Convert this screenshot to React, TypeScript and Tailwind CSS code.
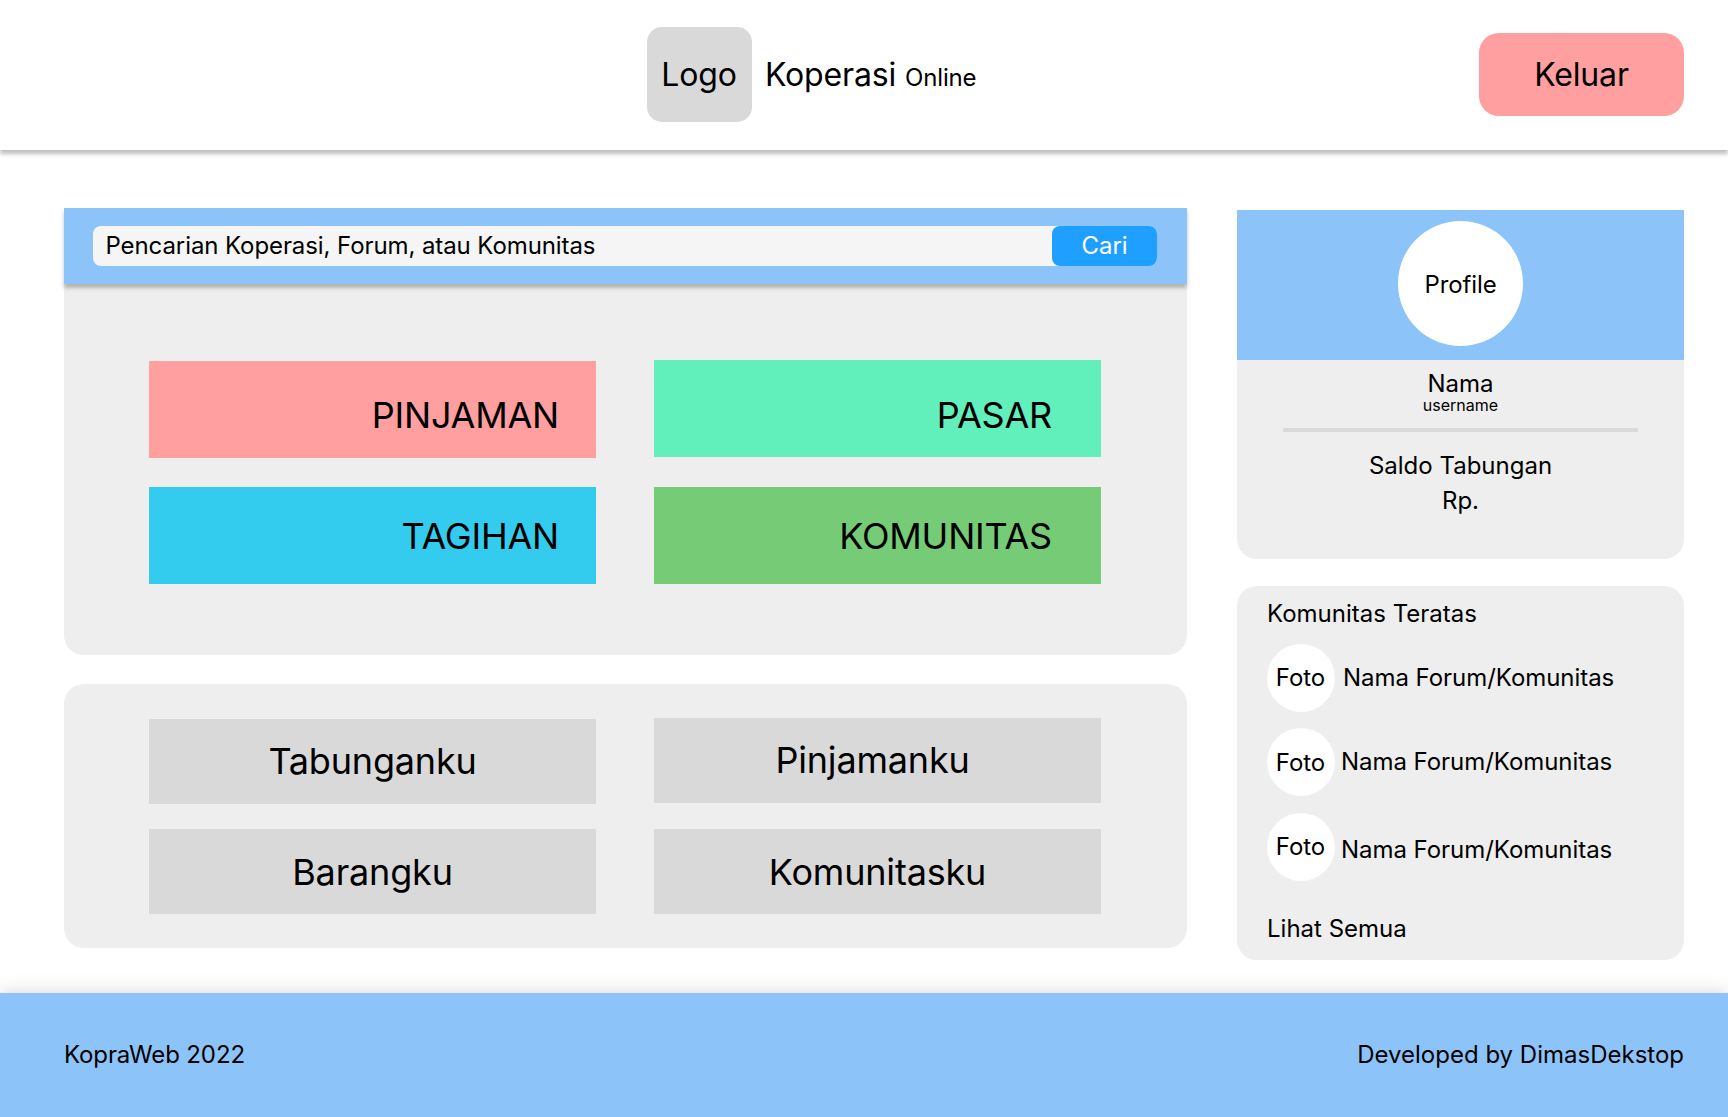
import React from "react";

type Tile = { label: string; className: string };

const menuColumns: Tile[][] = [
  [
    { label: "PINJAMAN", className: "mt-px h-[97px] bg-[#ff9f9f] pr-[37px] pt-[11px]" },
    { label: "TAGIHAN", className: "mt-[29px] h-[97px] bg-[#34ccee] pr-[37px]" },
  ],
  [
    { label: "PASAR", className: "h-[97px] bg-[#61efbc] pr-[49px] pt-[13px]" },
    { label: "KOMUNITAS", className: "mt-[30px] h-[97px] bg-[#76cc76] pr-[49px]" },
  ],
];

const ownColumns: Tile[][] = [
  [
    { label: "Tabunganku", className: "mt-px h-[85px] pb-px" },
    { label: "Barangku", className: "mt-[25px] h-[85px]" },
  ],
  [
    { label: "Pinjamanku", className: "h-[85px] pb-px pr-[10px]" },
    { label: "Komunitasku", className: "mt-[26px] h-[85px]" },
  ],
];

const communities = [
  { row: "mt-[7px]", photo: "pb-px", name: "pl-2 pb-px" },
  { row: "mt-4", photo: "pt-px", name: "pl-1.5 pb-px" },
  { row: "mt-[17px]", photo: "pb-px", name: "pl-1.5 pt-[5px]" },
];

function Header() {
  return (
    <header className="flex h-[150px] items-center bg-white pl-[647px] pr-11 pb-px tracking-[-0.15px] shadow-[0_4px_4px_rgba(0,0,0,0.25)]">
      <div className="flex h-[95px] w-[105px] items-center justify-center rounded-[15px] bg-[#d9d9d9] pr-px text-[32px] leading-[39px]">
        Logo
      </div>
      <h1 className="ml-[13px] whitespace-nowrap text-[32px] leading-[39px]">
        Koperasi <span className="text-2xl leading-[29px]">Online</span>
      </h1>
      <button className="ml-auto h-[83px] w-[205px] rounded-[20px] bg-[#ff9f9f] text-[32px] leading-[39px]">
        Keluar
      </button>
    </header>
  );
}

function SearchBar() {
  return (
    <div className="flex h-[76px] items-center bg-[#8cc4fa] pl-[29px] pr-[30px] shadow-[0_4px_4px_rgba(0,0,0,0.25)]">
      <div className="flex h-10 flex-1 rounded-lg bg-[#f5f5f5]">
        <div className="flex-1 pl-[12.5px] pt-[5px] text-2xl leading-[29px] tracking-[-0.09px]">
          Pencarian Koperasi, Forum, atau Komunitas
        </div>
        <button className="h-10 w-[105px] rounded-lg bg-[#1f9fff] pb-[2px] text-2xl leading-[29px] text-white">
          Cari
        </button>
      </div>
    </div>
  );
}

function Profile() {
  return (
    <section className="h-[349px] overflow-hidden rounded-b-[20px] bg-[#eeeeee] text-center text-2xl leading-[29px]">
      <div className="flex h-[150px] justify-center bg-[#8cc4fa] pt-[11px]">
        <div className="flex size-[125px] items-center justify-center rounded-full bg-white pt-[2px] tracking-[-0.1px]">
          Profile
        </div>
      </div>
      <div className="mt-[9px]">Nama</div>
      <div className="-mt-[2px] text-base leading-[19px]">username</div>
      <div className="mx-auto mt-[13px] h-1 w-[355px] bg-[#d9d9d9]" />
      <div className="mt-[19px]">Saldo Tabungan</div>
      <div className="mt-1.5">Rp.</div>
    </section>
  );
}

function Communities() {
  return (
    <section className="mt-[27px] h-[374px] rounded-[20px] bg-[#eeeeee] pl-[30px] pt-[13px] text-2xl leading-[29px]">
      <h2 className="pb-[9px]">Komunitas Teratas</h2>
      {communities.map((c, i) => (
        <div key={i} className={`flex h-[68px] items-center tracking-[-0.05px] ${c.row}`}>
          <div className={`flex size-[68px] items-center justify-center rounded-full bg-white pr-px ${c.photo}`}>
            Foto
          </div>
          <div className={c.name}>Nama Forum/Komunitas</div>
        </div>
      ))}
      <a className="mt-[33px] block">Lihat Semua</a>
    </section>
  );
}

export default function App() {
  return (
    <div className="flex h-[1117px] w-[1728px] flex-col overflow-hidden bg-white font-['Inter',sans-serif] text-black">
      <Header />
      <main className="flex flex-1 gap-[50px] pl-16 pr-11 pt-[58px]">
        <div className="w-[1123px]">
          <section className="h-[447px] rounded-b-[20px] bg-[#eeeeee]">
            <SearchBar />
            <div className="flex gap-[58px] pl-[85px] pt-[76px]">
              {menuColumns.map((column, i) => (
                <div key={i} className="w-[447px]">
                  {column.map((tile) => (
                    <div
                      key={tile.label}
                      className={`flex items-center justify-end text-4xl leading-[44px] tracking-[-0.22px] ${tile.className}`}
                    >
                      {tile.label}
                    </div>
                  ))}
                </div>
              ))}
            </div>
          </section>
          <section className="mt-[29px] flex h-[264px] gap-[58px] rounded-[20px] bg-[#eeeeee] pl-[85px] pt-[34px]">
            {ownColumns.map((column, i) => (
              <div key={i} className="w-[447px]">
                {column.map((tile) => (
                  <div
                    key={tile.label}
                    className={`flex items-center justify-center bg-[#d9d9d9] text-4xl leading-[44px] tracking-[-0.18px] ${tile.className}`}
                  >
                    {tile.label}
                  </div>
                ))}
              </div>
            ))}
          </section>
        </div>
        <aside className="w-[447px] pt-[2px]">
          <Profile />
          <Communities />
        </aside>
      </main>
      <footer className="flex h-[124px] items-center justify-between bg-[#8cc4fa] pb-px pl-16 pr-11 text-2xl leading-[29px] shadow-[0_4px_20px_rgba(0,0,0,0.25)]">
        <span className="tracking-[-0.12px]">KopraWeb 2022</span>
        <span>Developed by DimasDekstop</span>
      </footer>
    </div>
  );
}
